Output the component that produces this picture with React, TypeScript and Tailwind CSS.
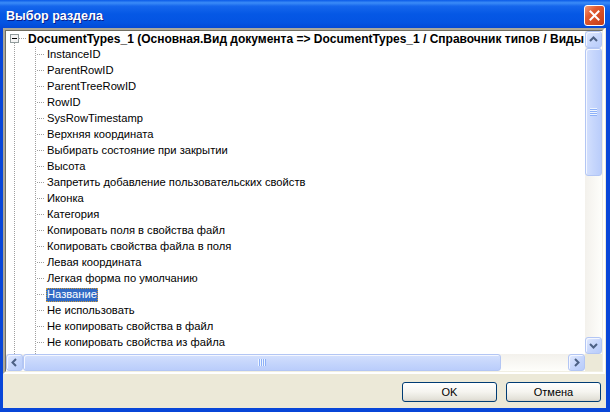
import React from "react";

const items = [
  "InstanceID",
  "ParentRowID",
  "ParentTreeRowID",
  "RowID",
  "SysRowTimestamp",
  "Верхняя координата",
  "Выбирать состояние при закрытии",
  "Высота",
  "Запретить добавление пользовательских свойств",
  "Иконка",
  "Категория",
  "Копировать поля в свойства файл",
  "Копировать свойства файла в поля",
  "Левая координата",
  "Легкая форма по умолчанию",
  "Название",
  "Не использовать",
  "Не копировать свойства в файл",
  "Не копировать свойства из файла",
  "Описание",
];

const SELECTED = "Название";
const font = "font-['Tahoma','Liberation_Sans',sans-serif]";

function Chevron({ dir }: { dir: "up" | "down" | "left" | "right" }) {
  const pts = {
    up: "1,6 4.5,2.5 8,6",
    down: "1,3 4.5,6.5 8,3",
    left: "6,1 2.5,4.5 6,8",
    right: "3,1 6.5,4.5 3,8",
  }[dir];
  return (
    <svg width="9" height="9" viewBox="0 0 9 9">
      <polyline points={pts} fill="none" stroke="#4D6185" strokeWidth="2" />
    </svg>
  );
}

function ArrowBtn({ dir }: { dir: "up" | "down" | "left" | "right" }) {
  return (
    <div className="w-[17px] h-[17px] shrink-0 rounded-[3px] border border-[#B3C6F4] bg-[linear-gradient(135deg,#E2EAFE_0%,#C6D6FC_55%,#B8CCFA_100%)] shadow-[inset_1px_1px_0_#F4F7FF] flex items-center justify-center">
      <Chevron dir={dir} />
    </div>
  );
}

function Grip({ vertical }: { vertical: boolean }) {
  const lines = [0, 2, 4, 6];
  return vertical ? (
    <div className="flex flex-col">
      {lines.map((i) => (
        <div key={i} className="w-[7px] h-[2px] border-t border-[#EEF4FE] border-b border-b-[#8CB0F8]" />
      ))}
    </div>
  ) : (
    <div className="flex">
      {lines.map((i) => (
        <div key={i} className="h-[7px] w-[2px] border-l border-[#EEF4FE] border-r border-r-[#8CB0F8]" />
      ))}
    </div>
  );
}

// expander box + connector for the root node
function RootLines() {
  return (
    <svg width="20" height="16" className="shrink-0" shapeRendering="crispEdges">
      <rect x="4.5" y="3.5" width="8" height="8" fill="#F4F4F4" stroke="#919B9C" />
      <line x1="6" y1="7.5" x2="11" y2="7.5" stroke="#000" />
      <line x1="13" y1="7.5" x2="20" y2="7.5" stroke="#A0A0A0" strokeDasharray="1 1" />
      <line x1="8.5" y1="12" x2="8.5" y2="16" stroke="#A0A0A0" strokeDasharray="1 1" />
    </svg>
  );
}

function ChildLines() {
  return (
    <svg width="39" height="16" className="shrink-0" shapeRendering="crispEdges">
      <line x1="8.5" y1="0" x2="8.5" y2="16" stroke="#A0A0A0" strokeDasharray="1 1" />
      <line x1="29.5" y1="0" x2="29.5" y2="16" stroke="#A0A0A0" strokeDasharray="1 1" />
      <line x1="31" y1="7.5" x2="39" y2="7.5" stroke="#A0A0A0" strokeDasharray="1 1" />
    </svg>
  );
}

function XpButton({ label }: { label: string }) {
  return (
    <button className="w-[95px] h-[20px] rounded-[3px] border border-[#003C74] bg-[linear-gradient(180deg,#FFFFFF_0%,#F5F4EF_50%,#E3E1D8_90%,#D6D0C5_100%)] text-[11px] leading-none text-black flex items-center justify-center">
      {label}
    </button>
  );
}

export default function App() {
  return (
    <div className={`w-[610px] h-[412px] flex flex-col bg-[#0846D8] ${font}`}>
      {/* title bar */}
      <div className="h-[28px] shrink-0 flex items-start pl-[6px] pr-[5px] bg-[linear-gradient(180deg,#0A5AE8_0%,#3B8CF7_10%,#1566EC_22%,#0558E5_50%,#0454E2_80%,#0349D6_100%)]">
        <span className="flex-1 pt-[10px] leading-none text-white font-bold text-[12.5px] font-['Trebuchet_MS','Liberation_Sans',sans-serif] [text-shadow:1px_1px_0_#0B1E8A]">
          Выбор раздела
        </span>
        <div className="mt-[5px] w-[21px] h-[21px] rounded-[3px] border border-white bg-[linear-gradient(135deg,#F39A77_0%,#E05A30_35%,#D14A22_70%,#C23D1A_100%)] flex items-center justify-center">
          <svg width="11" height="11" viewBox="0 0 11 11">
            <path d="M1.5 1.5 L9.5 9.5 M9.5 1.5 L1.5 9.5" stroke="#fff" strokeWidth="2" strokeLinecap="square" />
          </svg>
        </div>
      </div>

      {/* body */}
      <div className="flex-1 flex flex-col ml-[3px] mr-[4px] mb-[4px] bg-[#ECE9D8]">
        <div className="h-[346px] mr-[1px] border-2 border-t-[#ACA899] border-l-[#ACA899] border-b-white border-r-white">
          <div className="h-full border border-t-[#716F64] border-l-[#716F64] border-b-[#F1EFE2] border-r-[#F1EFE2] grid grid-cols-[1fr_17px] grid-rows-[1fr_17px] bg-white">
            {/* tree */}
            <div className="overflow-hidden text-[11.2px] text-black leading-none">
              <div className="h-[16px] flex items-center whitespace-nowrap">
                <RootLines />
                <span className="pl-[2px] font-bold text-[12px]">
                  DocumentTypes_1 (Основная.Вид документа =&gt; DocumentTypes_1 / Справочник типов / Виды документов)
                </span>
              </div>
              {items.map((t) => (
                <div key={t} className="h-[16px] flex items-center whitespace-nowrap">
                  <ChildLines />
                  {t === SELECTED ? (
                    <span className="ml-[1px] px-[1px] h-[14px] flex items-center bg-[#316AC5] text-white outline-1 outline-dotted outline-[#CE9A3B] -outline-offset-1">
                      {t}
                    </span>
                  ) : (
                    <span className="pl-[2px]">{t}</span>
                  )}
                </div>
              ))}
            </div>

            {/* vertical scrollbar */}
            <div className="flex flex-col bg-[linear-gradient(90deg,#F3F1EC_0%,#FEFEFB_100%)]">
              <ArrowBtn dir="up" />
              <div className="h-[128px] rounded-[3px] border border-[#B3C6F4] bg-[linear-gradient(90deg,#D4E0FD_0%,#C6D6FC_50%,#BACDFB_100%)] shadow-[inset_1px_1px_0_#F4F7FF] flex items-center justify-center">
                <Grip vertical />
              </div>
              <div className="flex-1" />
              <ArrowBtn dir="down" />
            </div>

            {/* horizontal scrollbar */}
            <div className="flex bg-[linear-gradient(180deg,#F3F1EC_0%,#FEFEFB_100%)]">
              <ArrowBtn dir="left" />
              <div className="w-[478px] rounded-[3px] border border-[#B3C6F4] bg-[linear-gradient(180deg,#D4E0FD_0%,#C6D6FC_50%,#BACDFB_100%)] shadow-[inset_1px_1px_0_#F4F7FF] flex items-center justify-center">
                <Grip vertical={false} />
              </div>
              <div className="flex-1" />
              <ArrowBtn dir="right" />
            </div>
            <div className="bg-[#ECE9D8]" />
          </div>
        </div>

        {/* buttons */}
        <div className="flex justify-end gap-[9px] pt-[8px] pr-[5px]">
          <XpButton label="OK" />
          <XpButton label="Отмена" />
        </div>
      </div>
    </div>
  );
}
